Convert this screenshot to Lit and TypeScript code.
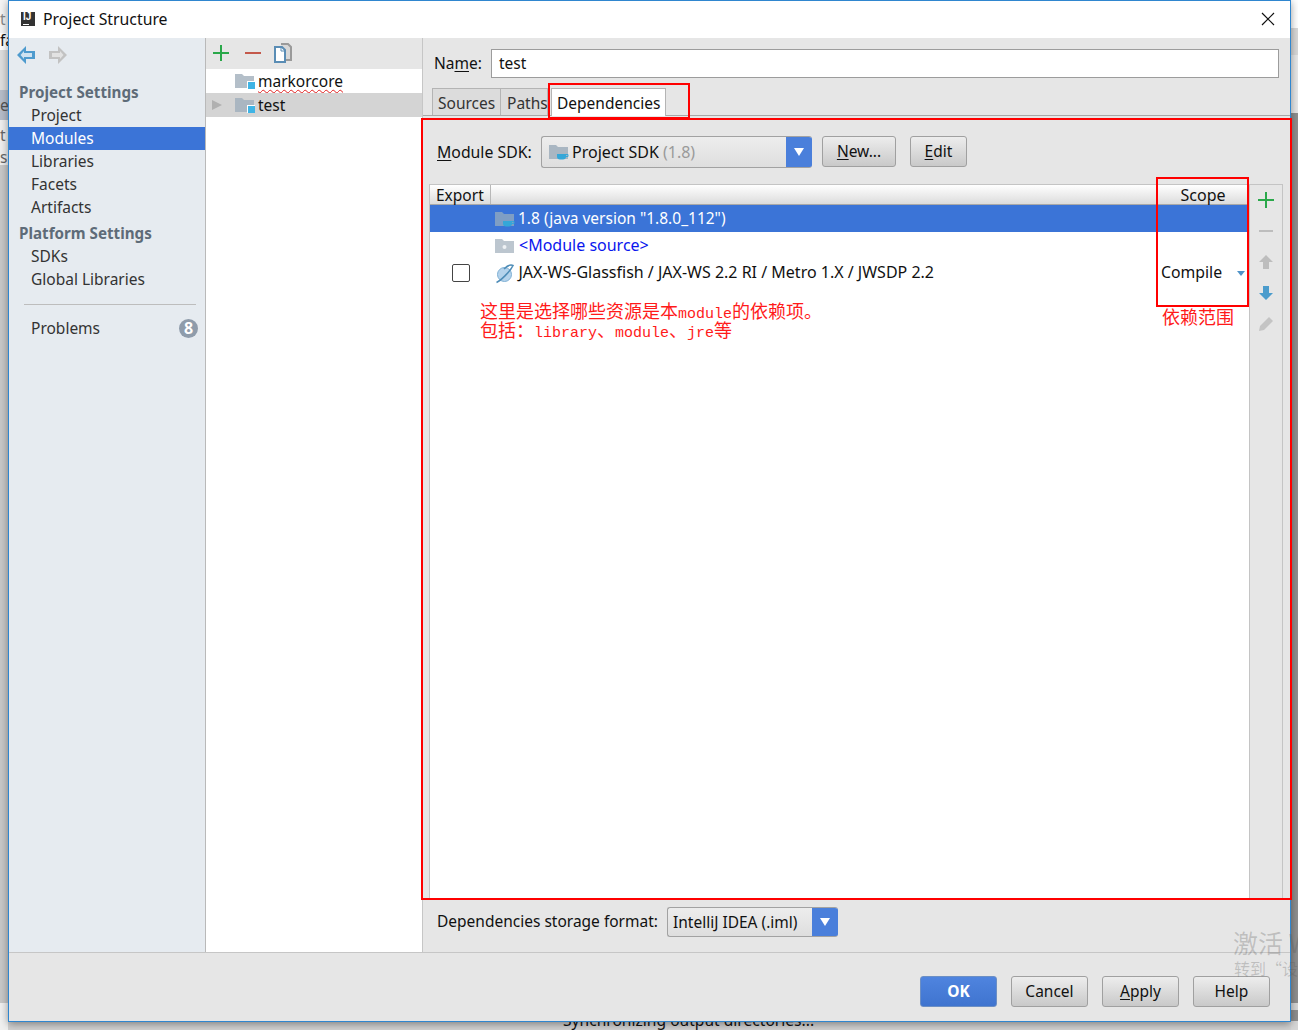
import { LitElement, html, css, svg } from "lit";
import { customElement } from "lit/decorators.js";

const folder = (fill: string, badge = "") => html`<svg class="fi" width="20" height="16" viewBox="0 0 20 16">
  <path d="M0 1h7l2 2h10v12H0z" fill="${fill}"/>${badge === "square" ? svg`<rect x="12" y="8" width="8" height="8" fill="#fff"/><rect x="13" y="9" width="7" height="7" fill="#3fb4e5"/>` : ""}
  ${badge === "cup" ? svg`<path d="M8 10h9v2.500a3 3 0 0 1-3 3h-3a3 3 0 0 1-3-3z" fill="#35a7d8"/><path d="M17 10.500h2v2h-2" fill="none" stroke="#35a7d8"/>` : ""}
  ${badge === "dot" ? svg`<circle cx="9.500" cy="9" r="2" fill="#eef1f4"/>` : ""}
</svg>`;

@customElement("app-root")
export class AppRoot extends LitElement {
  static styles = css`
    :host { display: block; width: 1298px; height: 1030px; position: relative; overflow: hidden; background: #d2d2d2;
      font-family: "Noto Sans", "Open Sans", sans-serif; font-size: 15.5px; color: #111; }
    * { box-sizing: border-box; }
    u { text-underline-offset: 2px; }
    .dialog { position: absolute; left: 8px; top: 0; width: 1283px; height: 1022px; border: 1px solid #2f86cf; background: #e6e6e6;
      display: flex; flex-direction: column; box-shadow: 0 2px 8px rgba(0,0,0,.4); }
    .title { height: 37px; flex: none; background: #fff; display: flex; align-items: center; padding: 0 15px 2px 12px; gap: 8px; }
    .title .logo { width: 14px; height: 14px; background: #333; color: #fff; font: bold 10px/10px "Liberation Sans", sans-serif; padding-left: 2px; position: relative; }
    .title .logo::after { content: ""; position: absolute; left: 2px; bottom: 1px; width: 6px; height: 1px; background: #fff; }
    .title .name { flex: 1; font-size: 15.800px; }
    .body { flex: 1; display: flex; min-height: 0; border-bottom: 1px solid #c6c6c6; }
    .side { width: 197px; flex: none; background: #e6ebf0; border-right: 1px solid #b9b9b9; }
    .nav { height: 34px; display: flex; align-items: center; gap: 14px; padding: 0 0 0 8px; }
    .group { font-weight: 700; font-size: 15.200px; color: #5e6b78; height: 23px; line-height: 23px; padding-left: 10px; margin-top: 3px; }
    .group.first { margin-top: 9px; }
    .item { height: 23px; line-height: 23px; padding-left: 22px; color: #333; }
    .item.sel { background: #3b74d7; color: #fff; }
    .sep { height: 1px; background: #bdbdbd; margin: 13px 9px 12px 15px; }
    .prob { display: flex; justify-content: space-between; align-items: center; padding-right: 7px; }
    .badge { width: 19px; height: 19px; border-radius: 50%; background: #8f9cab; color: #fff; font: 700 16px/19px "Noto Sans", sans-serif; text-align: center; }
    .mid { width: 217px; flex: none; background: #fff; border-right: 1px solid #c6c6c6; }
    .mid .tb { height: 31px; background: #e6e6e6; display: flex; align-items: center; gap: 8px; padding: 0 0 2px 7px; }
    .row { height: 24px; display: flex; align-items: center; color: #111; position: relative; padding-left: 29px; gap: 3px; }
    .row.sel { background: #d4d4d4; }
    .row .arrow { position: absolute; left: 6px; top: 7px; width: 0; height: 0; border-left: 10px solid #b0b0b0; border-top: 5px solid transparent; border-bottom: 5px solid transparent; }
    .wavy { text-decoration: underline wavy #e02020 1px; text-underline-offset: 2px; text-decoration-skip-ink: none; }
    .main { flex: 1; min-width: 0; display: flex; flex-direction: column; }
    .name-row { display: flex; align-items: center; gap: 11px; padding: 11px 11px 0 11px; height: 40px; }
    .name-row > span { position: relative; top: -1px; width: 46px; white-space: nowrap; }
    .input { flex: 1; height: 29px; background: #fff; border: 1px solid #9c9c9c; padding-left: 7px; line-height: 26px; }
    .tabs { display: flex; height: 28px; margin-top: 10px; padding-left: 9px; border-bottom: 1px solid #a8a8a8; flex: none; }
    .tab { width: 69px; padding-left: 5px; line-height: 28px; border: 1px solid #b4b4b4; border-bottom: none; background: #dcdcdc; color: #333; white-space: nowrap; }
    .tab.p { width: 47px; border-left: none; padding-left: 6px; }
    .tab.on { width: 115px; background: #fff; margin-left: 3px; height: 28px; padding-left: 5px; color: #111; }
    .pane { flex: 1; min-height: 0; display: flex; flex-direction: column; padding: 20px 7px 0 7px; }
    .sdk { display: flex; align-items: flex-start; height: 32px; padding-left: 7px; flex: none; }
    .sdk .lbl { width: 104px; font-size: 15.800px; line-height: 32px; }
    .combo { display: flex; align-items: center; background: linear-gradient(#ededed, #dedede); border: 1px solid #a2a2a2; border-right: none; border-radius: 3px; overflow: hidden; position: relative; }
    .combo .v { flex: 1; display: flex; align-items: center; gap: 3px; padding-left: 7px; padding-bottom: 1px; white-space: nowrap; }
    .sdkv { font-size: 16px; }
    .combo .dd { width: 26px; height: 100%; background: #4a7fdb; display: flex; align-items: center; justify-content: center; flex: none; }
    .combo .dd i { width: 0; height: 0; border-top: 8px solid #fff; border-left: 5px solid transparent; border-right: 5px solid transparent; }
    .gray { color: #9a9a9a; }
    .btn { height: 31px; border: 1px solid #a0a0a0; border-radius: 3px; background: linear-gradient(#ededed, #c9c9c9); display: flex; align-items: center; justify-content: center; color: #111; padding-bottom: 2px; }
    .tableWrap { flex: 1; min-height: 0; display: flex; margin: 16px 0 9px -1px; }
    .table { flex: 1; background: #fff; border: 1px solid #c4c4c4; border-bottom: none; display: flex; flex-direction: column; min-width: 0; }
    .thead { height: 20px; flex: none; background: linear-gradient(#fff, #dcdcdc); border-bottom: 1px solid #a8a8a8; display: flex; line-height: 20px; position: relative; }
    .thead .a { width: 61px; padding-left: 6px; border-right: 1px solid #b8b8b8; }
    .thead .b { flex: 1; border-right: 1px solid #c4c4c4; margin-right: 92px; }
    .thead .c { position: absolute; right: 0; width: 92px; text-align: center; font-size: 16px; }
    .tr { height: 27px; flex: none; display: flex; align-items: center; position: relative; padding-bottom: 2px; }
    .tr.sel { background: #3b74d7; color: #fff; }
    .tr .ck { width: 18px; height: 18px; border: 1px solid #444; border-radius: 2px; background: #fff; margin-left: 22px; position: relative; top: 1px; }
    .tr .ic { position: absolute; left: 65px; top: 5px; }
    .tr .t { position: absolute; left: 88px; white-space: nowrap; }
    .tr .jax { font-size: 16px; left: 88.500px; }
    .tr .scope { position: absolute; left: 731px; font-size: 15.800px; }
    .tr .tri { position: absolute; left: 807px; top: 12px; width: 0; height: 0; border-top: 5px solid #4f93c8; border-left: 4px solid transparent; border-right: 4px solid transparent; }
    .blue { color: #0a16ee; font-size: 16px; }
    .tools { width: 33px; flex: none; border: 1px solid #c4c4c4; border-left: none; border-bottom: none; display: flex; flex-direction: column; align-items: center; background: #e6e6e6; }
    .tools div { height: 31px; display: flex; align-items: center; justify-content: center; }
    .tools div:first-child { margin-top: -1px; }
    .note { position: absolute; color: #ff1a1a; font-family: "Noto Sans CJK SC", sans-serif; font-size: 18px; line-height: 19px; white-space: pre; }
    .note div { height: 19px; }
    .note b { font-family: "Liberation Mono", monospace; font-size: 15px; font-weight: 400; }
    .n1 { left: 480px; top: 301px; }
    .n2 { left: 1162px; top: 307px; }
    .red { position: absolute; border: 2px solid #f00; }
    .r1 { left: 548px; top: 83px; width: 142px; height: 36px; }
    .r2 { left: 421px; top: 118px; width: 871px; height: 782px; }
    .r3 { left: 1156px; top: 177px; width: 93px; height: 130px; }
    .fmt { display: flex; align-items: center; height: 30px; padding-left: 7px; margin-bottom: 15px; flex: none; }
    .fmt .lbl { width: 230px; white-space: nowrap; position: relative; top: -1px; }
    .foot { height: 68px; flex: none; display: flex; justify-content: flex-end; gap: 14px; padding: 23px 20px 0 0; }
    .foot .btn { width: 77px; height: 31px; }
    .foot .ok { background: linear-gradient(#4f84df, #3f74cf); border-color: #6c8fc4; color: #fff; font-weight: 700; }
    .mark { position: absolute; color: rgba(90,90,90,.28); font-family: "Noto Sans CJK SC", sans-serif; white-space: nowrap; }
    .m1 { left: 1233px; top: 927px; font-size: 25px; line-height: 30px; }
    .m2 { left: 1234px; top: 958px; font-size: 16px; line-height: 21px; }
    .sync { position: absolute; left: 563px; top: 1009px; white-space: nowrap; font-size: 15.600px; }
    .strip { position: absolute; overflow: hidden; }
    .strip span { position: absolute; left: 0; }
    .l { left: 0; top: 0; width: 8px; height: 1030px; background: #c8c8c8; }
    .l1 { left: 0; top: 0; width: 8px; height: 33px; background: #f4f4f4; color: #888; }
    .l2 { left: 0; top: 33px; width: 8px; height: 17px; background: #fff; color: #111; }
    .l3 { left: 0; top: 50px; width: 8px; height: 40px; background: #dedede; }
    .l4 { left: 0; top: 90px; width: 8px; height: 30px; background: #b6bdc9; color: #555; }
    .l5 { left: 0; top: 120px; width: 8px; height: 45px; background: #efefef; color: #666; }
    .l6 { left: 0; top: 1003px; width: 8px; height: 27px; background: #f0f0f0; }
    .r { left: 1291px; top: 0; width: 7px; height: 1030px; background: #8f8f8f; }
    .ra { left: 1291px; top: 0; width: 7px; height: 28px; background: #fff; }
    .rb { left: 1291px; top: 28px; width: 7px; height: 27px; background: #d8d8d8; }
    .rc { left: 1291px; top: 55px; width: 7px; height: 58px; background: #e8e8e8; }
    .rd { left: 1291px; top: 1003px; width: 7px; height: 7px; background: #d6d6d6; }
    .re { left: 1291px; top: 1021px; width: 7px; height: 9px; background: #d6d6d6; }
  `;

  render() {
    return html`
      <div class="strip l"></div>
      <div class="strip l1"><span style="top:8px">t</span></div>
      <div class="strip l2"><span style="top:-4px">fa</span></div>
      <div class="strip l3"></div>
      <div class="strip l4"><span style="top:4px">e</span></div>
      <div class="strip l5"><span style="top:4px">t</span><span style="top:26px">s</span></div>
      <div class="strip l6"></div>
      <div class="strip r"></div><div class="strip ra"></div><div class="strip rb"></div><div class="strip rc"></div><div class="strip rd"></div><div class="strip re"></div>
      <div class="sync">Synchronizing output directories...</div>
      <div class="dialog">
        <div class="title">
          <div class="logo">IJ</div>
          <div class="name">Project Structure</div>
          <svg width="14" height="14" viewBox="0 0 14 14"><path d="M1 1l12 12M13 1L1 13" stroke="#111" stroke-width="1.200" fill="none"/></svg>
        </div>
        <div class="body">
          <div class="side">
            <div class="nav">
              <svg width="18" height="18" viewBox="0 0 18 18"><path d="M9 0L0 9l9 9v-5h9V5H9z" fill="#4e9bce"/><path d="M7 5L3.500 9 7 13v-2h8V7H7z" fill="#cfe3f1"/></svg>
              <svg width="18" height="18" viewBox="0 0 18 18"><path d="M9 0l9 9-9 9v-5H0V5h9z" fill="#c2c2c2"/><path d="M11 5l3.500 4L11 13v-2H3V7h8z" fill="#e2e2e2"/></svg>
            </div>
            <div class="group first">Project Settings</div>
            <div class="item">Project</div>
            <div class="item sel">Modules</div>
            <div class="item">Libraries</div>
            <div class="item">Facets</div>
            <div class="item">Artifacts</div>
            <div class="group">Platform Settings</div>
            <div class="item">SDKs</div>
            <div class="item">Global Libraries</div>
            <div class="sep"></div>
            <div class="item prob"><span>Problems</span><span class="badge">8</span></div>
          </div>
          <div class="mid">
            <div class="tb">
              <svg width="16" height="16" viewBox="0 0 16 16"><path d="M8 0v16M0 8h16" stroke="#2aa84a" stroke-width="2"/></svg>
              <svg style="margin-left:8px" width="16" height="16" viewBox="0 0 16 16"><path d="M0 8h16" stroke="#c4594b" stroke-width="2"/></svg>
              <svg style="margin-left:4px" width="20" height="20" viewBox="0 0 20 20"><path d="M8 1h7l3 3v13h-5" fill="#d8d8d8" stroke="#9a9a9a" stroke-width="2"/><path d="M2 4h7l3 3v12H2z" fill="#fff" stroke="#5a8db5" stroke-width="2"/><path d="M8 4v4h4" fill="none" stroke="#5a8db5"/></svg>
            </div>
            <div class="row">${folder("#b4bfc9", "square")}<span class="wavy">markorcore</span></div>
            <div class="row sel"><span class="arrow"></span>${folder("#aab6c1", "square")}<span>test</span></div>
          </div>
          <div class="main">
            <div class="name-row"><span>Na<u>m</u>e:</span><div class="input">test</div></div>
            <div class="tabs"><div class="tab">Sources</div><div class="tab p">Paths</div><div class="tab on">Dependencies</div></div>
            <div class="pane">
              <div class="sdk">
                <span class="lbl"><u>M</u>odule SDK:</span>
                <div class="combo" style="width:271px;height:32px"><span class="v">${folder("#a9b6c2", "cup")}<span class="sdkv">Project SDK <span class="gray">(1.8)</span></span></span><span class="dd"><i></i></span></div>
                <div class="btn" style="width:74px;margin-left:10px"><span><u>N</u>ew...</span></div>
                <div class="btn" style="width:57px;margin-left:14px"><span><u>E</u>dit</span></div>
              </div>
              <div class="tableWrap">
                <div class="table">
                  <div class="thead"><span class="a">Export</span><span class="b"></span><span class="c">Scope</span></div>
                  <div class="tr sel"><span class="ic">${folder("#7f9ec4", "cup")}</span><span class="t">1.8 (java version "1.8.0_112")</span></div>
                  <div class="tr"><span class="ic">${folder("#bcc6cf", "dot")}</span><span class="t blue" style="left:89px">&lt;Module source&gt;</span></div>
                  <div class="tr"><span class="ck"></span><span class="ic"><svg width="20" height="20" viewBox="0 0 20 20"><circle cx="9.500" cy="10.500" r="7" fill="#b5d3ec" stroke="#7fb0d4"/><path d="M1.500 18.500C5 17 15 8 18 1.500 15 0 11 3 9 5" stroke="#4f8db8" stroke-width="1.600" fill="none"/></svg></span><span class="t jax">JAX-WS-Glassfish / JAX-WS 2.2 RI / Metro 1.X / JWSDP 2.2</span><span class="scope">Compile</span><span class="tri"></span></div>
                </div>
                <div class="tools">
                  <div><svg width="16" height="16" viewBox="0 0 16 16"><path d="M8 0v16M0 8h16" stroke="#2aa84a" stroke-width="2"/></svg></div>
                  <div><svg width="16" height="16" viewBox="0 0 16 16"><path d="M1 8h14" stroke="#bdbdbd" stroke-width="2"/></svg></div>
                  <div><svg width="16" height="16" viewBox="0 0 16 16"><path d="M8 1l7 7h-4v7H5V8H1z" fill="#bdbdbd"/></svg></div>
                  <div><svg width="16" height="16" viewBox="0 0 16 16"><path d="M8 15L1 8h4V1h6v7h4z" fill="#4b9ccc"/></svg></div>
                  <div><svg width="16" height="16" viewBox="0 0 16 16"><path d="M11 1l4 4-9 9-5 1 1-5z" fill="#c4c4c4"/></svg></div>
                </div>
              </div>
              <div class="fmt"><span class="lbl">Dependencies storage format:</span>
                <div class="combo" style="width:171px;height:30px"><span class="v" style="padding-left:5px">IntelliJ IDEA (.iml)</span><span class="dd"><i></i></span></div>
              </div>
            </div>
          </div>
        </div>
        <div class="foot">
          <div class="btn ok">OK</div><div class="btn">Cancel</div><div class="btn"><span><u>A</u>pply</span></div><div class="btn">Help</div>
        </div>
      </div>
      <div class="note n1"><div>这里是选择哪些资源是本<b>module</b>的依赖项。</div><div>包括：<b>library</b>、<b>module</b>、<b>jre</b>等</div></div>
      <div class="note n2">依赖范围</div>
      <div class="red r1"></div><div class="red r2"></div><div class="red r3"></div>
      <div class="mark m1">激活 W</div><div class="mark m2">转到“设</div>
    `;
  }
}
